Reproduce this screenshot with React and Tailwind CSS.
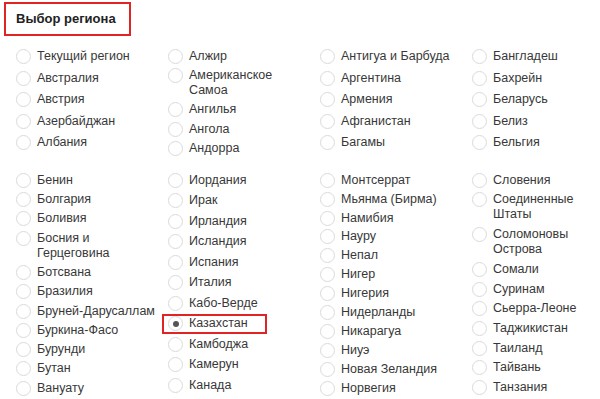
import React from "react";

const top = [
  { gap: "gap-[6.5px]", items: ["Текущий регион", "Австралия", "Австрия", "Азербайджан", "Албания"] },
  { gap: "gap-[4.2px]", items: ["Алжир", "Американское\nСамоа", "Ангилья", "Ангола", "Андорра"] },
  { gap: "gap-[6.5px]", items: ["Антигуа и Барбуда", "Аргентина", "Армения", "Афганистан", "Багамы"] },
  { gap: "gap-[6.5px]", items: ["Бангладеш", "Бахрейн", "Беларусь", "Белиз", "Бельгия"] },
];

const bottom = [
  {
    gap: "gap-[4.3px]",
    items: ["Бенин", "Болгария", "Боливия", "Босния и\nГерцеговина", "Ботсвана", "Бразилия", "Бруней-Дарусаллам", "Буркина-Фасо", "Бурунди", "Бутан", "Вануату"],
  },
  {
    gap: "gap-[5.5px]",
    items: ["Иордания", "Ирак", "Ирландия", "Исландия", "Испания", "Италия", "Кабо-Верде", "Казахстан", "Камбоджа", "Камерун", "Канада"],
  },
  {
    gap: "gap-[3.9px]",
    items: ["Монтсеррат", "Мьянма (Бирма)", "Намибия", "Науру", "Непал", "Нигер", "Нигерия", "Нидерланды", "Никарагуа", "Ниуэ", "Новая Зеландия", "Норвегия"],
  },
  {
    gap: "gap-[4.7px]",
    items: ["Словения", "Соединенные\nШтаты", "Соломоновы\nОстрова", "Сомали", "Суринам", "Сьерра-Леоне", "Таджикистан", "Таиланд", "Тайвань", "Танзания"],
  },
];

function Radio({ label }) {
  const selected = label === "Казахстан";
  return (
    <div className="relative flex items-start gap-[6px]">
      <span className="flex h-[15px] w-[15px] shrink-0 items-center justify-center rounded-full border border-[#dadada] bg-white">
        {selected && <span className="h-[6px] w-[6px] rounded-full bg-[#555555]" />}
      </span>
      <span className="whitespace-pre text-[12.5px] leading-[15px] text-[#383838]">{label}</span>
      {selected && (
        <span className="pointer-events-none absolute left-[-6px] top-[-2.5px] h-[20px] w-[105px] border-2 border-[#e02424]" />
      )}
    </div>
  );
}

function Group({ cols, className }) {
  return (
    <div className={"grid grid-cols-[152px_152px_152px_1fr] pl-[16px] " + className}>
      {cols.map((c, i) => (
        <div key={i} className={"flex flex-col " + c.gap}>
          {c.items.map((it) => (
            <Radio key={it} label={it} />
          ))}
        </div>
      ))}
    </div>
  );
}

export default function App() {
  return (
    <div
      className="h-[399px] w-[600px] overflow-hidden bg-white pt-[2px]"
      style={{ fontFamily: '"Liberation Sans", Arial, sans-serif' }}
    >
      <div className="ml-[4px] flex h-[34px] w-[127px] items-center border-2 border-[#e02424] pl-[10px]">
        <span className="text-[13px] font-bold text-[#222222]">Выбор региона</span>
      </div>
      <Group cols={top} className="mt-[13px]" />
      <Group cols={bottom} className="mt-[17px]" />
    </div>
  );
}
